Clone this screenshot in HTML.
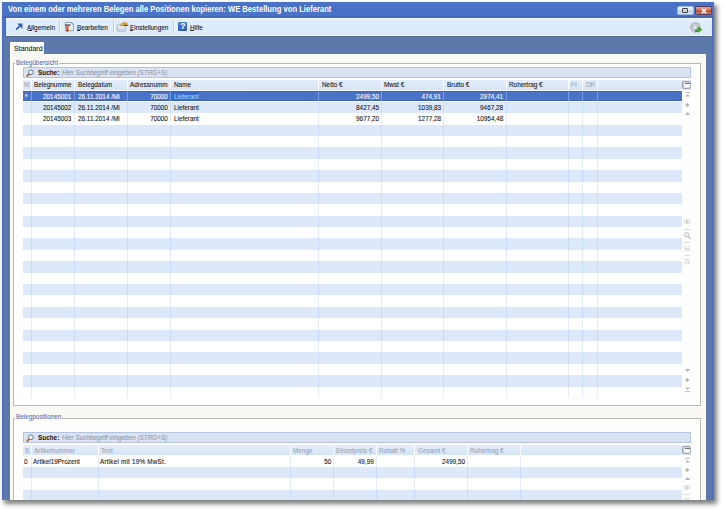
<!DOCTYPE html><html><head><meta charset="utf-8"><style>
html,body{margin:0;padding:0;background:#fff;width:723px;height:509px;overflow:hidden;position:relative}
.b{position:absolute;box-sizing:border-box}
.t{position:absolute;white-space:pre;font-family:"Liberation Sans",sans-serif;font-size:7.5px;line-height:8.617px;color:#111;-webkit-text-stroke:0.08px currentColor;transform:scaleX(0.85);transform-origin:0 0}
.t.r{transform-origin:100% 0}
.g{color:#9aa3b3}
.w{color:#fff}
svg{position:absolute;overflow:visible}
</style></head><body>
<div class="b" style="left:2.00px;top:2.00px;width:712.30px;height:498.00px;background:#4a72c6;box-shadow:2px 3px 4.5px 0.5px rgba(0,0,0,0.5)"></div>
<div style="position:absolute;left:0;top:0;width:714.3px;height:500px;overflow:hidden">
<div class="b" style="left:2.00px;top:2.00px;width:712.30px;height:498.20px;background:#4a72c6"></div>
<div class="b" style="left:4.40px;top:35.90px;width:707.30px;height:464.30px;background:#5d78aa;border-top:1px solid #53699c"></div>
<div class="b" style="left:4.50px;top:17.60px;width:1.20px;height:18.30px;background:#4667b2"></div>
<div class="b" style="left:2.00px;top:16.20px;width:712.30px;height:1.40px;background:#4568b4"></div>
<div class="b" style="left:5.70px;top:17.60px;width:706.00px;height:18.30px;background:linear-gradient(#e2eefc,#dbe9fb);border-top:1px solid #f3f8ff;border-bottom:1px solid #eef5ff"></div>
<div class="b" style="left:9.50px;top:54.20px;width:696.80px;height:446.00px;background:#f9f8f3;border-top:1px solid #fff;border-left:1px solid #fff"></div>
<div class="b" style="left:9.50px;top:41.90px;width:34.80px;height:13.30px;background:linear-gradient(#ffffff,#f9f8f3);border-left:1px solid #fff"></div>
<span class="t w" style="left:8px;top:5.18px;font-weight:bold;font-size:8.2px;line-height:9.4px;transform:scaleX(0.932);-webkit-text-stroke:0">Von einem oder mehreren Belegen alle Positionen kopieren: WE Bestellung von Lieferant</span>
<div class="b" style="left:677.00px;top:5.90px;width:16.50px;height:9.00px;background:linear-gradient(#eef4fc 0%,#d3e2f6 45%,#b9cde9 55%,#d9e7f8 100%);border:1px solid #9cb6df;border-radius:1.5px"></div>
<div class="b" style="left:682.20px;top:8.00px;width:6.20px;height:4.60px;border:1.2px solid #3c3c3c;border-radius:1px;background:#d8d8d8"></div>
<div class="b" style="left:694.50px;top:5.90px;width:17.00px;height:9.00px;background:linear-gradient(#e6a08a 0%,#d0705a 45%,#bb4f39 55%,#d17860 100%);border:1px solid #5b3c5e;border-radius:1.5px"></div>
<svg style="left:699.5px;top:7.6px" width="8" height="6" viewBox="0 0 8 6"><path d="M1.8 0.8 L6.2 5.2 M6.2 0.8 L1.8 5.2" stroke="#fff" stroke-width="1.5"/></svg>
<div class="b" style="left:58.90px;top:20.20px;width:1.00px;height:13.10px;background:#c3ccdb"></div>
<div class="b" style="left:59.90px;top:20.20px;width:1.00px;height:13.10px;background:#f7faff"></div>
<div class="b" style="left:112.90px;top:20.20px;width:1.00px;height:13.10px;background:#c3ccdb"></div>
<div class="b" style="left:113.90px;top:20.20px;width:1.00px;height:13.10px;background:#f7faff"></div>
<div class="b" style="left:172.90px;top:20.20px;width:1.00px;height:13.10px;background:#c3ccdb"></div>
<div class="b" style="left:173.90px;top:20.20px;width:1.00px;height:13.10px;background:#f7faff"></div>
<svg style="left:14px;top:22px" width="10" height="10" viewBox="14 22 10 10"><path d="M16.6 29.2 L21 24.8" stroke="#3b5cbc" stroke-width="1.7" stroke-linecap="round"/><path d="M17.2 23.6 H22.4 V28.8 L20.6 27.2 L20.6 25.4 L18.8 25.4 Z" fill="#3b5cbc"/></svg>
<svg style="left:64px;top:21px" width="11" height="12" viewBox="64 21 11 12"><path d="M65.6 22.4 H71.2 L73.3 24.5 V30.7 H65.6 Z" fill="#f5f8fb" stroke="#7b8c9c" stroke-width="0.8"/><path d="M71 22.4 L73.3 24.7" stroke="#4f7480" stroke-width="1"/><path d="M64.9 24.4 H70.6 V25.8 H64.9 Z" fill="#5b4b55"/><path d="M66.2 25.6 H68.6 V30.6 Q68.6 31.8 67.4 31.8 Q66.2 31.8 66.2 30.6 Z" fill="#d2603a"/><path d="M66.4 30 Q66.6 31.6 67.6 31.6 Q68.4 31.4 68.4 30 Z" fill="#a82818"/></svg>
<svg style="left:116px;top:21px" width="13" height="12" viewBox="116 21 13 12"><rect x="117.2" y="24.3" width="8.6" height="7" rx="1" fill="#dfe8f6" stroke="#9aaccc" stroke-width="0.7"/><path d="M118 29.8 H125" stroke="#b8c8e8" stroke-width="1.2"/><path d="M119.6 26.6 Q121 22.2 125 22 Q127.6 22.4 128 24 L124 26.2 Q121.8 25.8 120.6 27.2 Z" fill="#d4a22c"/><path d="M123.8 25.6 L128.2 25.1" stroke="#6a2a20" stroke-width="1"/><circle cx="121.2" cy="27" r="0.9" fill="#fffbe0"/></svg>
<div class="b" style="left:178.10px;top:22.40px;width:8.90px;height:8.60px;background:linear-gradient(#4c7ad0,#2f5bb4);border-radius:1.2px"></div>
<span class="t w" style="left:180.2px;top:22.2px;font-weight:bold;font-size:8.6px;line-height:9px;transform:none">?</span>
<span class="t " style="left:27.40px;top:24.01px;">Allgemein</span>
<div class="b" style="left:27.70px;top:30.10px;width:4.30px;height:0.80px;background:#3a3a3a"></div>
<span class="t " style="left:76.50px;top:24.01px;">Bearbeiten</span>
<div class="b" style="left:76.70px;top:30.10px;width:3.80px;height:0.80px;background:#3a3a3a"></div>
<span class="t " style="left:129.70px;top:24.01px;">Einstellungen</span>
<div class="b" style="left:129.90px;top:30.10px;width:3.60px;height:0.80px;background:#3a3a3a"></div>
<span class="t " style="left:190.00px;top:24.01px;">Hilfe</span>
<div class="b" style="left:190.20px;top:30.10px;width:4.20px;height:0.80px;background:#3a3a3a"></div>
<svg style="left:690.3px;top:21.6px" width="13" height="11" viewBox="0 0 13 11"><path d="M5 0.3 L6.2 0.3 L6.5 1.6 L7.7 2.1 L8.8 1.3 L9.6 2.2 L8.9 3.3 L9.3 4.5 L10.5 4.8 L10.5 6 L9.2 6.3 L8.7 7.5 L9.4 8.6 L8.5 9.4 L7.4 8.7 L6.2 9.1 L5.9 10.3 L4.7 10.3 L4.4 9 L3.2 8.5 L2.1 9.3 L1.3 8.4 L2 7.3 L1.6 6.1 L0.3 5.8 L0.3 4.6 L1.6 4.3 L2.1 3.1 L1.4 2 L2.3 1.2 L3.4 1.9 L4.7 1.5 Z" fill="#cdd2d8" stroke="#858b94" stroke-width="0.6"/><circle cx="5.4" cy="5.3" r="1.7" fill="#f4f6f8" stroke="#9aa0a8" stroke-width="0.5"/><path d="M5.2 7.6 L7.6 7.6 L7.6 4.6 L12.3 7.6 L8.4 10.8 L7.6 9.9 L5.2 9.9 Z" fill="#3b9a2b"/><path d="M8.2 7.4 L9.6 8.1 L8.6 9 Z" fill="#9be67c"/></svg>
<span class="t " style="left:14.20px;top:45.21px;transform:scaleX(0.94)">Standard</span>
<div class="b" style="left:13.30px;top:63.20px;width:687.30px;height:342.80px;border:1px solid #b9b8b0;box-shadow:inset 1px 1px 0 #fff, 1px 1px 0 #fff;background:#fefefd"></div>
<div class="b" style="left:14.90px;top:60.20px;width:44.10px;height:6.00px;background:#f9f8f3"></div>
<div class="b" style="left:14.90px;top:64.20px;width:44.10px;height:3.00px;background:#fefefd"></div>
<span class="t " style="left:15.90px;top:59.01px;color:#5474bd">Belegübersicht</span>
<div class="b" style="left:13.40px;top:417.80px;width:687.20px;height:112.20px;border:1px solid #b9b8b0;box-shadow:inset 1px 1px 0 #fff, 1px 1px 0 #fff;background:#fefefd"></div>
<div class="b" style="left:14.80px;top:414.80px;width:47.20px;height:6.00px;background:#f9f8f3"></div>
<div class="b" style="left:14.80px;top:418.80px;width:47.20px;height:3.00px;background:#fefefd"></div>
<span class="t " style="left:15.80px;top:413.41px;color:#5474bd">Belegpositionen</span>
<div class="b" style="left:23.10px;top:90.40px;width:658.70px;height:307.40px;background:#fff"></div>
<div class="b" style="left:22.60px;top:67.00px;width:668.30px;height:10.80px;background:#d9e3f4;border:1px solid #b3c4e2"></div>
<svg style="left:24.6px;top:68.20px" width="9" height="9" viewBox="0 0 9 9"><circle cx="5.9" cy="4.3" r="2.4" fill="#e4f4fc" stroke="#5f6b7c" stroke-width="0.9"/><path d="M3.9 6.3 L2.4 7.9" stroke="#b86a3a" stroke-width="2" stroke-linecap="round"/></svg>
<span class="t " style="left:38.00px;top:69.11px;font-weight:bold;-webkit-text-stroke:0">Suche:</span>
<span class="t " style="left:62.30px;top:69.11px;font-style:italic;color:#8f98a8">Hier Suchbegriff eingeben (STRG+S)</span>
<div class="b" style="left:23.10px;top:79.80px;width:668.40px;height:10.60px;background:linear-gradient(#e3edfb,#d8e5f7)"></div>
<div class="b" style="left:23.10px;top:90.90px;width:658.70px;height:10.39px;background:#4a72c7;border-top:1px solid #3e63b6;border-bottom:1px solid #3e63b6"></div>
<div class="b" style="left:171.20px;top:91.00px;width:28.10px;height:10.39px;background:#3868cc"></div>
<div class="b" style="left:23.10px;top:101.79px;width:658.70px;height:11.39px;background:#dde9fb"></div>
<div class="b" style="left:23.10px;top:124.57px;width:658.70px;height:11.39px;background:#dde9fb"></div>
<div class="b" style="left:23.10px;top:147.35px;width:658.70px;height:11.39px;background:#dde9fb"></div>
<div class="b" style="left:23.10px;top:170.13px;width:658.70px;height:11.39px;background:#dde9fb"></div>
<div class="b" style="left:23.10px;top:192.91px;width:658.70px;height:11.39px;background:#dde9fb"></div>
<div class="b" style="left:23.10px;top:215.69px;width:658.70px;height:11.39px;background:#dde9fb"></div>
<div class="b" style="left:23.10px;top:238.47px;width:658.70px;height:11.39px;background:#dde9fb"></div>
<div class="b" style="left:23.10px;top:261.25px;width:658.70px;height:11.39px;background:#dde9fb"></div>
<div class="b" style="left:23.10px;top:284.03px;width:658.70px;height:11.39px;background:#dde9fb"></div>
<div class="b" style="left:23.10px;top:306.81px;width:658.70px;height:11.39px;background:#dde9fb"></div>
<div class="b" style="left:23.10px;top:329.59px;width:658.70px;height:11.39px;background:#dde9fb"></div>
<div class="b" style="left:23.10px;top:352.37px;width:658.70px;height:11.39px;background:#dde9fb"></div>
<div class="b" style="left:23.10px;top:375.15px;width:658.70px;height:11.39px;background:#dde9fb"></div>
<div class="b" style="left:30.70px;top:79.80px;width:1.00px;height:10.60px;background:#fbfdff"></div>
<div class="b" style="left:30.70px;top:90.40px;width:1.00px;height:307.40px;background:rgba(120,160,225,0.19)"></div>
<div class="b" style="left:30.70px;top:90.40px;width:1.00px;height:11.39px;background:rgba(170,200,255,0.45)"></div>
<div class="b" style="left:74.30px;top:79.80px;width:1.00px;height:10.60px;background:#fbfdff"></div>
<div class="b" style="left:74.30px;top:90.40px;width:1.00px;height:307.40px;background:rgba(120,160,225,0.19)"></div>
<div class="b" style="left:74.30px;top:90.40px;width:1.00px;height:11.39px;background:rgba(170,200,255,0.45)"></div>
<div class="b" style="left:126.60px;top:79.80px;width:1.00px;height:10.60px;background:#fbfdff"></div>
<div class="b" style="left:126.60px;top:90.40px;width:1.00px;height:307.40px;background:rgba(120,160,225,0.19)"></div>
<div class="b" style="left:126.60px;top:90.40px;width:1.00px;height:11.39px;background:rgba(170,200,255,0.45)"></div>
<div class="b" style="left:169.90px;top:79.80px;width:1.00px;height:10.60px;background:#fbfdff"></div>
<div class="b" style="left:169.90px;top:90.40px;width:1.00px;height:307.40px;background:rgba(120,160,225,0.19)"></div>
<div class="b" style="left:169.90px;top:90.40px;width:1.00px;height:11.39px;background:rgba(170,200,255,0.45)"></div>
<div class="b" style="left:318.40px;top:79.80px;width:1.00px;height:10.60px;background:#fbfdff"></div>
<div class="b" style="left:318.40px;top:90.40px;width:1.00px;height:307.40px;background:rgba(120,160,225,0.19)"></div>
<div class="b" style="left:318.40px;top:90.40px;width:1.00px;height:11.39px;background:rgba(170,200,255,0.45)"></div>
<div class="b" style="left:380.90px;top:79.80px;width:1.00px;height:10.60px;background:#fbfdff"></div>
<div class="b" style="left:380.90px;top:90.40px;width:1.00px;height:307.40px;background:rgba(120,160,225,0.19)"></div>
<div class="b" style="left:380.90px;top:90.40px;width:1.00px;height:11.39px;background:rgba(170,200,255,0.45)"></div>
<div class="b" style="left:443.10px;top:79.80px;width:1.00px;height:10.60px;background:#fbfdff"></div>
<div class="b" style="left:443.10px;top:90.40px;width:1.00px;height:307.40px;background:rgba(120,160,225,0.19)"></div>
<div class="b" style="left:443.10px;top:90.40px;width:1.00px;height:11.39px;background:rgba(170,200,255,0.45)"></div>
<div class="b" style="left:505.50px;top:79.80px;width:1.00px;height:10.60px;background:#fbfdff"></div>
<div class="b" style="left:505.50px;top:90.40px;width:1.00px;height:307.40px;background:rgba(120,160,225,0.19)"></div>
<div class="b" style="left:505.50px;top:90.40px;width:1.00px;height:11.39px;background:rgba(170,200,255,0.45)"></div>
<div class="b" style="left:567.90px;top:79.80px;width:1.00px;height:10.60px;background:#fbfdff"></div>
<div class="b" style="left:567.90px;top:90.40px;width:1.00px;height:307.40px;background:rgba(120,160,225,0.19)"></div>
<div class="b" style="left:567.90px;top:90.40px;width:1.00px;height:11.39px;background:rgba(170,200,255,0.45)"></div>
<div class="b" style="left:582.00px;top:79.80px;width:1.00px;height:10.60px;background:#fbfdff"></div>
<div class="b" style="left:582.00px;top:90.40px;width:1.00px;height:307.40px;background:rgba(120,160,225,0.19)"></div>
<div class="b" style="left:582.00px;top:90.40px;width:1.00px;height:11.39px;background:rgba(170,200,255,0.45)"></div>
<div class="b" style="left:596.50px;top:79.80px;width:1.00px;height:10.60px;background:#fbfdff"></div>
<div class="b" style="left:596.50px;top:90.40px;width:1.00px;height:307.40px;background:rgba(120,160,225,0.19)"></div>
<div class="b" style="left:596.50px;top:90.40px;width:1.00px;height:11.39px;background:rgba(170,200,255,0.45)"></div>
<span class="t " style="left:24.40px;top:81.41px;color:#9aa4b5">M</span>
<span class="t " style="left:34.00px;top:81.41px;">Belegnumme</span>
<span class="t " style="left:77.50px;top:81.41px;">Belegdatum</span>
<span class="t " style="left:129.90px;top:81.41px;">Adressnumm</span>
<span class="t " style="left:173.50px;top:81.41px;">Name</span>
<span class="t " style="left:321.80px;top:81.41px;">Netto €</span>
<span class="t " style="left:384.00px;top:81.41px;">Mwst €</span>
<span class="t " style="left:446.50px;top:81.41px;">Brutto €</span>
<span class="t " style="left:509.00px;top:81.41px;">Rohertrag €</span>
<span class="t " style="left:571.40px;top:81.41px;color:#9aa4b5">FI</span>
<span class="t " style="left:585.50px;top:81.41px;color:#9aa4b5">DR</span>
<span class="t r " style="right:642.50px;top:92.61px;color:#fff">20145001</span>
<span class="t " style="left:77.50px;top:92.61px;color:#fff">26.11.2014 /Mi</span>
<span class="t r " style="right:546.40px;top:92.61px;color:#fff">70000</span>
<span class="t " style="left:173.50px;top:92.61px;color:#a6d6ff">Lieferant</span>
<span class="t r " style="right:335.30px;top:92.61px;color:#fff">2499,50</span>
<span class="t r " style="right:273.10px;top:92.61px;color:#fff">474,91</span>
<span class="t r " style="right:210.70px;top:92.61px;color:#fff">2974,41</span>
<span class="t r " style="right:642.50px;top:104.00px;">20145002</span>
<span class="t " style="left:77.50px;top:104.00px;">26.11.2014 /Mi</span>
<span class="t r " style="right:546.40px;top:104.00px;">70000</span>
<span class="t " style="left:173.50px;top:104.00px;">Lieferant</span>
<span class="t r " style="right:335.30px;top:104.00px;">8427,45</span>
<span class="t r " style="right:273.10px;top:104.00px;">1039,83</span>
<span class="t r " style="right:210.70px;top:104.00px;">9467,28</span>
<span class="t r " style="right:642.50px;top:115.39px;">20145003</span>
<span class="t " style="left:77.50px;top:115.39px;">26.11.2014 /Mi</span>
<span class="t r " style="right:546.40px;top:115.39px;">70000</span>
<span class="t " style="left:173.50px;top:115.39px;">Lieferant</span>
<span class="t r " style="right:335.30px;top:115.39px;">9677,20</span>
<span class="t r " style="right:273.10px;top:115.39px;">1277,28</span>
<span class="t r " style="right:210.70px;top:115.39px;">10954,48</span>
<span class="t " style="left:25.00px;top:92.61px;color:#fff">*</span>
<svg style="left:682px;top:81.00px" width="9" height="8" viewBox="0 0 9 8"><rect x="0.45" y="0.45" width="7.8" height="7" rx="1.4" fill="#e6e8ee" stroke="#8e939c" stroke-width="0.9"/><rect x="2.9" y="2.4" width="5.2" height="3.6" fill="#fff"/><path d="M2.9 2.4 H8.1" stroke="#4c525c" stroke-width="0.9"/><path d="M1.6 1.6 V6.2" stroke="#c4c0d8" stroke-width="0.8"/></svg>
<svg style="left:684.60px;top:92.20px" width="5.2" height="5" viewBox="0 0 5.2 5"><path d="M0.2 0.5 H5" stroke="#b3b3b3" stroke-width="0.8"/><path d="M2.6 2 L5 4.6 H0.2Z" fill="#b3b3b3"/></svg>
<svg style="left:684.90px;top:102.50px" width="4.6" height="4" viewBox="0 0 4.6 4"><path d="M2.3 0 L4.6 2 L2.3 4 L0 2Z" fill="#b3b3b3"/></svg>
<svg style="left:684.60px;top:111.90px" width="5.2" height="3" viewBox="0 0 5.2 3"><path d="M2.6 0 L5.2 3 H0Z" fill="#b3b3b3"/></svg>
<svg style="left:684.20px;top:219.40px" width="6" height="5" viewBox="0 0 6 5"><path d="M0.9 0.3 Q0.2 2.5 0.9 4.7 M5.1 0.3 Q5.8 2.5 5.1 4.7 M2.4 0.3 V4.7 M3.6 0.3 V4.7" stroke="#bcbcbc" stroke-width="0.7" fill="none"/></svg>
<div class="b" style="left:684.40px;top:228.80px;width:5.6px;height:0.8px;background:#dadada"></div>
<svg style="left:684.20px;top:232.00px" width="7" height="7" viewBox="0 0 7 7"><circle cx="2.8" cy="2.8" r="2.2" fill="#f0f0f0" stroke="#b5b5b5" stroke-width="0.8"/><path d="M4.4 4.4 L6.6 6.6" stroke="#b5b5b5" stroke-width="1.1"/></svg>
<div class="b" style="left:684.40px;top:241.80px;width:5.6px;height:0.8px;background:#dadada"></div>
<svg style="left:684.20px;top:246.00px" width="6" height="5" viewBox="0 0 6 5"><path d="M0.3 0.8 H2 M4 0.8 H5.7 M0.3 2.6 H5.7 M0.3 4.3 H5.7" stroke="#c0c0c0" stroke-width="0.8"/></svg>
<div class="b" style="left:684.40px;top:254.80px;width:5.6px;height:0.8px;background:#dadada"></div>
<svg style="left:684.20px;top:259.00px" width="6" height="6" viewBox="0 0 6 6"><path d="M0.3 0.8 H5.7 M1.3 3.2 V5.6 M4.3 3.2 V5.6 M2.6 3.2 H5.7" stroke="#c0c0c0" stroke-width="0.8"/></svg>
<svg style="left:684.60px;top:369.20px" width="5.2" height="3" viewBox="0 0 5.2 3"><path d="M2.6 3 L5.2 0 H0Z" fill="#b3b3b3"/></svg>
<svg style="left:684.90px;top:377.90px" width="4.6" height="4" viewBox="0 0 4.6 4"><path d="M2.3 0 L4.6 2 L2.3 4 L0 2Z" fill="#b3b3b3"/></svg>
<svg style="left:684.60px;top:387.00px" width="5.2" height="5" viewBox="0 0 5.2 5"><path d="M0.2 4.5 H5" stroke="#b3b3b3" stroke-width="0.8"/><path d="M2.6 3 L5 0.4 H0.2Z" fill="#b3b3b3"/></svg>
<div class="b" style="left:23.10px;top:455.50px;width:658.70px;height:44.70px;background:#fff"></div>
<div class="b" style="left:22.60px;top:431.90px;width:668.30px;height:11.20px;background:#d9e3f4;border:1px solid #b3c4e2"></div>
<svg style="left:24.6px;top:433.10px" width="9" height="9" viewBox="0 0 9 9"><circle cx="5.9" cy="4.3" r="2.4" fill="#e4f4fc" stroke="#5f6b7c" stroke-width="0.9"/><path d="M3.9 6.3 L2.4 7.9" stroke="#b86a3a" stroke-width="2" stroke-linecap="round"/></svg>
<span class="t " style="left:38.00px;top:434.01px;font-weight:bold;-webkit-text-stroke:0">Suche:</span>
<span class="t " style="left:62.30px;top:434.01px;font-style:italic;color:#8f98a8">Hier Suchbegriff eingeben (STRG+S)</span>
<div class="b" style="left:23.10px;top:444.90px;width:668.40px;height:10.60px;background:linear-gradient(#e3edfb,#d8e5f7)"></div>
<div class="b" style="left:23.10px;top:466.90px;width:658.70px;height:11.40px;background:#dde9fb"></div>
<div class="b" style="left:23.10px;top:489.70px;width:658.70px;height:10.50px;background:#dde9fb"></div>
<div class="b" style="left:30.70px;top:444.90px;width:1.00px;height:10.60px;background:#fbfdff"></div>
<div class="b" style="left:30.70px;top:455.50px;width:1.00px;height:44.70px;background:rgba(120,160,225,0.19)"></div>
<div class="b" style="left:97.80px;top:444.90px;width:1.00px;height:10.60px;background:#fbfdff"></div>
<div class="b" style="left:97.80px;top:455.50px;width:1.00px;height:44.70px;background:rgba(120,160,225,0.19)"></div>
<div class="b" style="left:289.90px;top:444.90px;width:1.00px;height:10.60px;background:#fbfdff"></div>
<div class="b" style="left:289.90px;top:455.50px;width:1.00px;height:44.70px;background:rgba(120,160,225,0.19)"></div>
<div class="b" style="left:333.00px;top:444.90px;width:1.00px;height:10.60px;background:#fbfdff"></div>
<div class="b" style="left:333.00px;top:455.50px;width:1.00px;height:44.70px;background:rgba(120,160,225,0.19)"></div>
<div class="b" style="left:376.00px;top:444.90px;width:1.00px;height:10.60px;background:#fbfdff"></div>
<div class="b" style="left:376.00px;top:455.50px;width:1.00px;height:44.70px;background:rgba(120,160,225,0.19)"></div>
<div class="b" style="left:413.90px;top:444.90px;width:1.00px;height:10.60px;background:#fbfdff"></div>
<div class="b" style="left:413.90px;top:455.50px;width:1.00px;height:44.70px;background:rgba(120,160,225,0.19)"></div>
<div class="b" style="left:466.90px;top:444.90px;width:1.00px;height:10.60px;background:#fbfdff"></div>
<div class="b" style="left:466.90px;top:455.50px;width:1.00px;height:44.70px;background:rgba(120,160,225,0.19)"></div>
<div class="b" style="left:519.70px;top:444.90px;width:1.00px;height:10.60px;background:#fbfdff"></div>
<div class="b" style="left:519.70px;top:455.50px;width:1.00px;height:44.70px;background:rgba(120,160,225,0.19)"></div>
<span class="t " style="left:24.70px;top:446.51px;color:#9aa4b5">S</span>
<span class="t " style="left:34.00px;top:446.51px;color:#9aa4b5">Artikelnummer</span>
<span class="t " style="left:100.50px;top:446.51px;color:#9aa4b5">Text</span>
<span class="t " style="left:293.00px;top:446.51px;color:#9aa4b5">Menge</span>
<span class="t " style="left:336.00px;top:446.51px;color:#9aa4b5">Einzelpreis €</span>
<span class="t " style="left:379.00px;top:446.51px;color:#9aa4b5">Rabatt %</span>
<span class="t " style="left:417.60px;top:446.51px;color:#9aa4b5">Gesamt €</span>
<span class="t " style="left:470.40px;top:446.51px;color:#9aa4b5">Rohertrag €</span>
<span class="t " style="left:23.50px;top:457.71px;">0</span>
<span class="t " style="left:33.00px;top:457.71px;">Artikel19Prozent</span>
<span class="t " style="left:100.00px;top:457.71px;letter-spacing:0.22px">Artikel mit 19% MwSt.</span>
<span class="t r " style="right:383.30px;top:457.71px;">50</span>
<span class="t r " style="right:340.30px;top:457.71px;">49,99</span>
<span class="t r " style="right:248.90px;top:457.71px;">2499,50</span>
<svg style="left:682px;top:446.40px" width="9" height="8" viewBox="0 0 9 8"><rect x="0.45" y="0.45" width="7.8" height="7" rx="1.4" fill="#e6e8ee" stroke="#8e939c" stroke-width="0.9"/><rect x="2.9" y="2.4" width="5.2" height="3.6" fill="#fff"/><path d="M2.9 2.4 H8.1" stroke="#4c525c" stroke-width="0.9"/><path d="M1.6 1.6 V6.2" stroke="#c4c0d8" stroke-width="0.8"/></svg>
<svg style="left:684.60px;top:457.90px" width="5.2" height="5" viewBox="0 0 5.2 5"><path d="M0.2 0.5 H5" stroke="#b3b3b3" stroke-width="0.8"/><path d="M2.6 2 L5 4.6 H0.2Z" fill="#b3b3b3"/></svg>
<svg style="left:684.90px;top:468.00px" width="4.6" height="4" viewBox="0 0 4.6 4"><path d="M2.3 0 L4.6 2 L2.3 4 L0 2Z" fill="#b3b3b3"/></svg>
<svg style="left:684.60px;top:477.00px" width="5.2" height="3" viewBox="0 0 5.2 3"><path d="M2.6 0 L5.2 3 H0Z" fill="#b3b3b3"/></svg>
<svg style="left:684.20px;top:484.70px" width="6" height="5" viewBox="0 0 6 5"><path d="M0.9 0.3 Q0.2 2.5 0.9 4.7 M5.1 0.3 Q5.8 2.5 5.1 4.7 M2.4 0.3 V4.7 M3.6 0.3 V4.7" stroke="#bcbcbc" stroke-width="0.7" fill="none"/></svg>
<div class="b" style="left:684.40px;top:494.00px;width:5.6px;height:0.8px;background:#dadada"></div>
<svg style="left:684.20px;top:497.60px" width="6" height="6" viewBox="0 0 6 6"><path d="M0.3 0.8 H5.7 M1.3 3.2 V5.6 M4.3 3.2 V5.6 M2.6 3.2 H5.7" stroke="#c0c0c0" stroke-width="0.8"/></svg>
</div>
</body></html>
